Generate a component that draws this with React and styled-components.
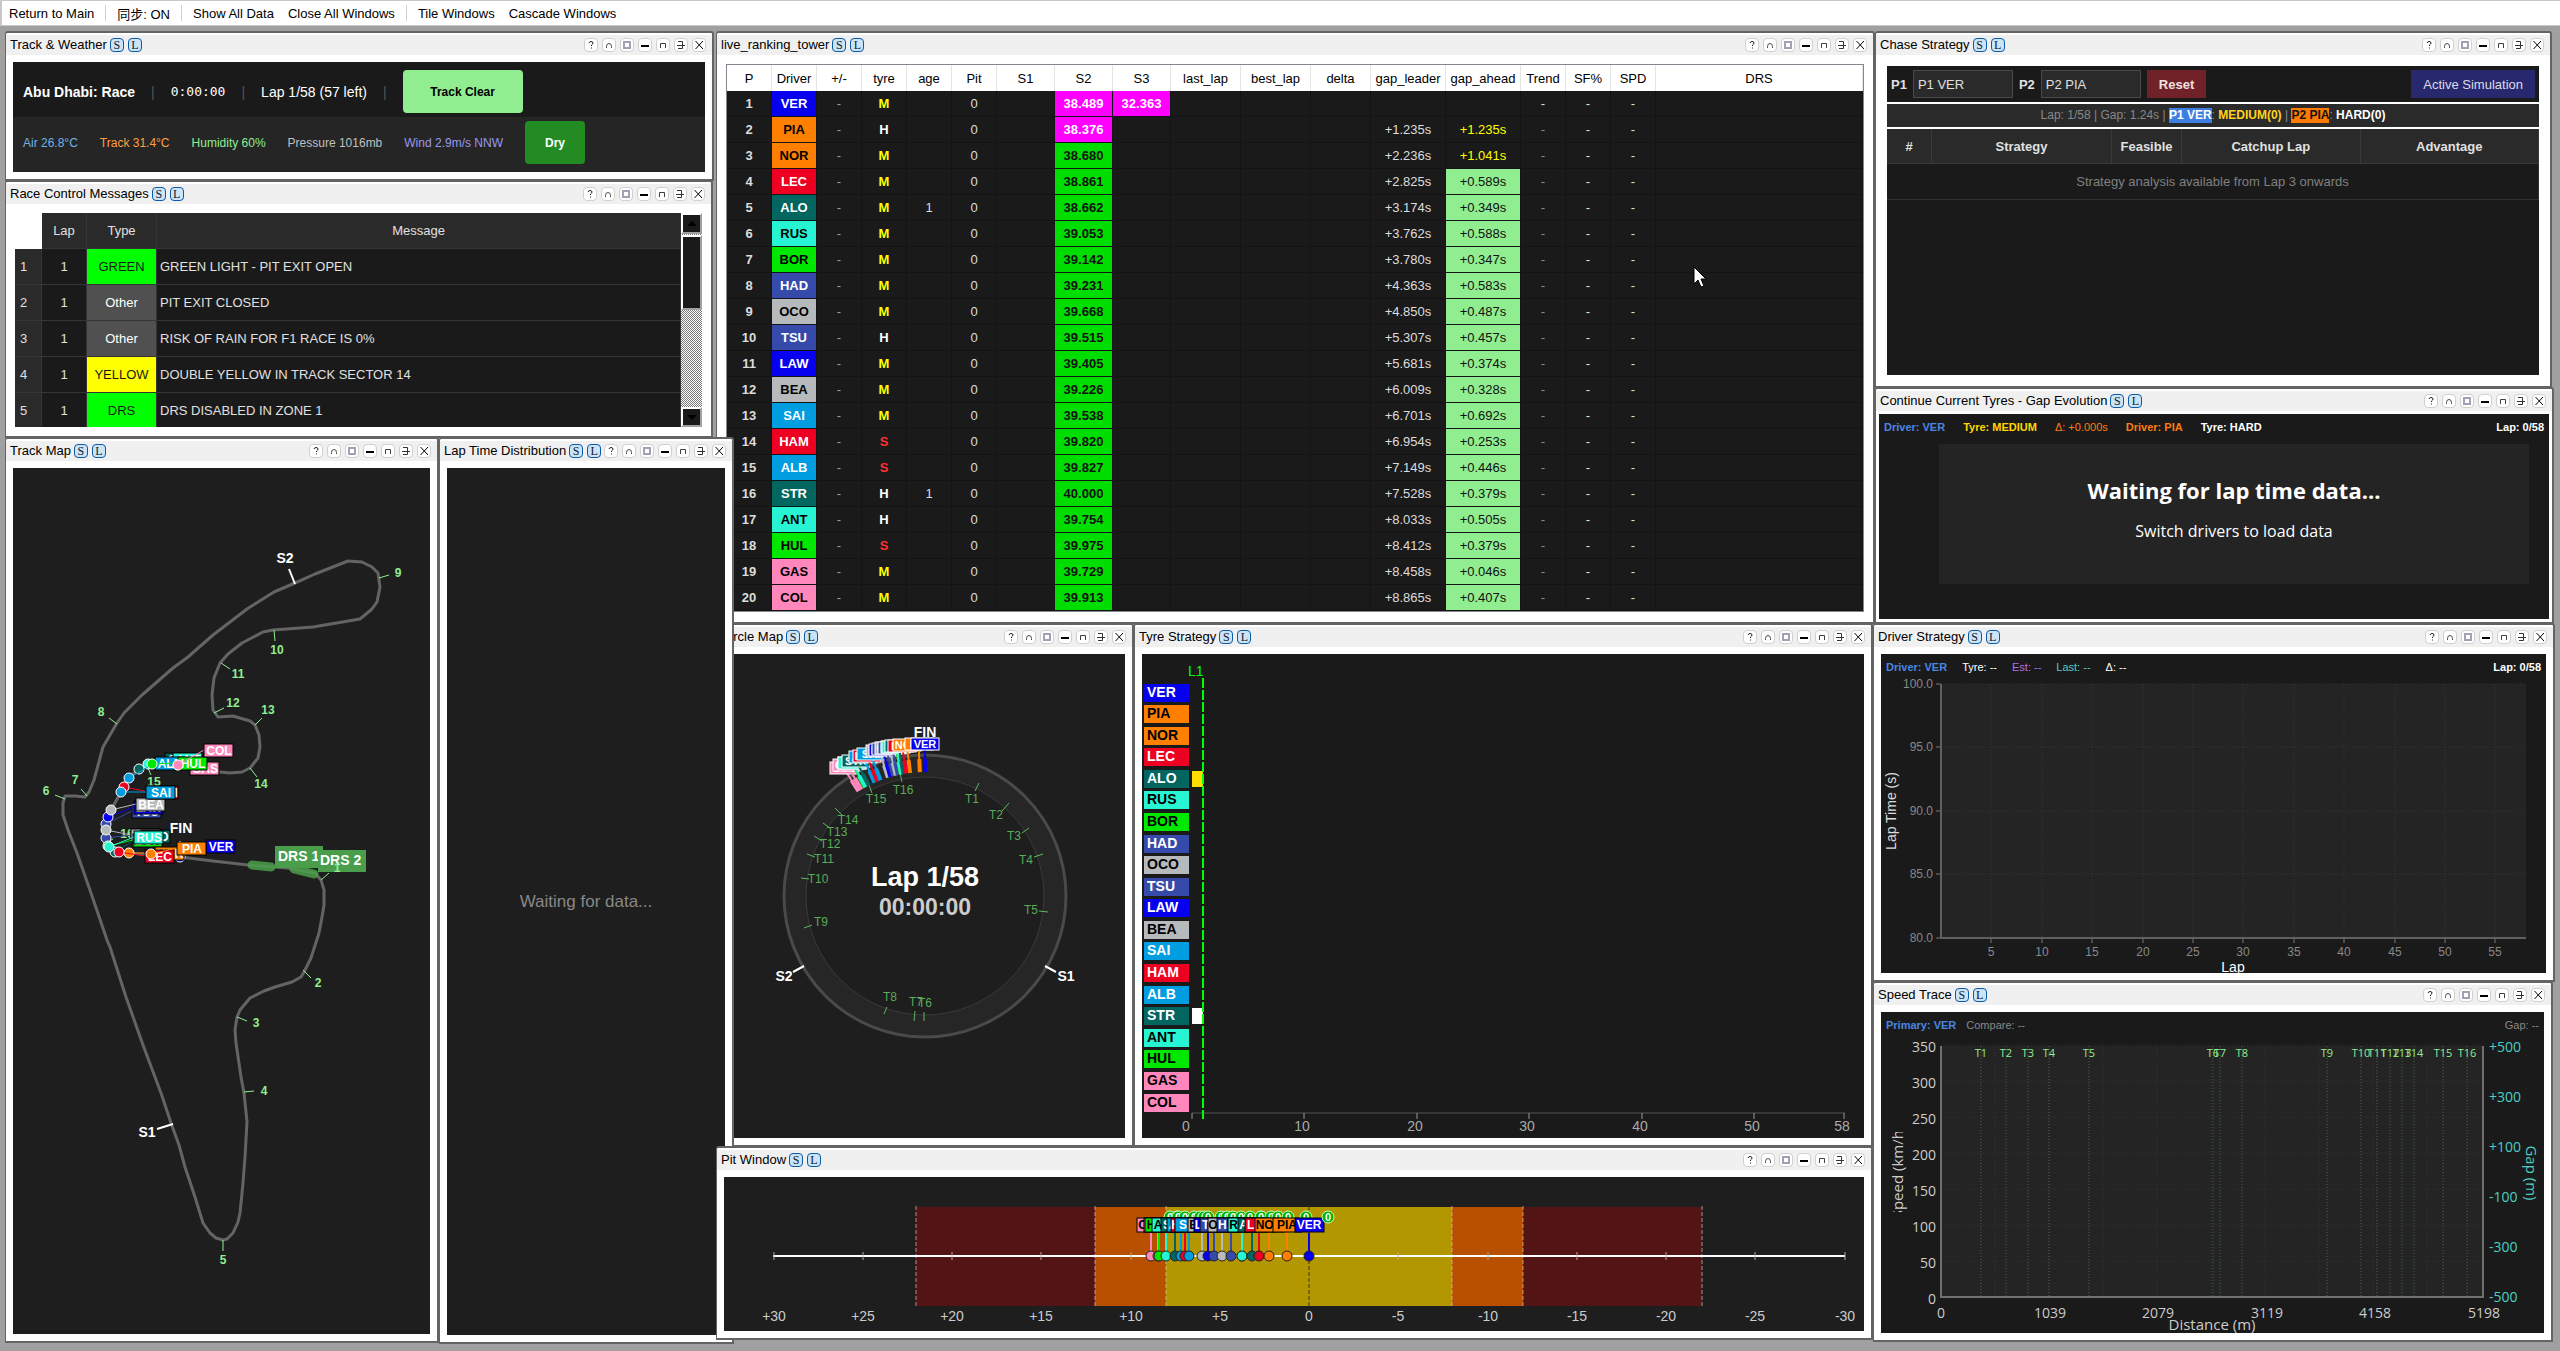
import React from 'react'
import styled, { createGlobalStyle } from 'styled-components'

const GlobalStyle = createGlobalStyle`
    * {
        box-sizing: border-box;
    }
    html, body {
        margin: 0;
        background: #a0a0a0;
    }
    body, button, select, table {
        font-family: "Liberation Sans", "Noto Sans CJK TC", sans-serif;
        font-size: 13px;
    }
    svg {
        display: block;
    }
`

const BLUE = { bg: '#0600ef', fg: '#fff' }
const ORANGE = { bg: '#ff8000', fg: '#000' }
const RED = { bg: '#ed0022', fg: '#fff' }
const TEAL = { bg: '#00665f', fg: '#fff' }
const CYAN = { bg: '#27f4d2', fg: '#000' }
const GREEN = { bg: '#00e700', fg: '#000' }
const INDIGO = { bg: '#364aab', fg: '#fff' }
const SILVER = { bg: '#b6babd', fg: '#000' }
const SKY = { bg: '#009de0', fg: '#fff' }
const PINK = { bg: '#ff87bc', fg: '#000' }

// code, team, tyre, age, sector 2, gap to leader, gap ahead, angle on the circle map
const drivers = [
    ['VER', BLUE, 'M', '', '38.489', 0, '', 0],
    ['PIA', ORANGE, 'H', '', '38.376', 1.235, '+1.235s', 2.4],
    ['NOR', ORANGE, 'M', '', '38.680', 2.236, '+1.041s', 6.9],
    ['LEC', RED, 'M', '', '38.861', 2.825, '+0.589s', 8.7],
    ['ALO', TEAL, 'M', '1', '38.662', 3.174, '+0.349s', 10],
    ['RUS', CYAN, 'M', '', '39.053', 3.762, '+0.588s', 11],
    ['BOR', GREEN, 'M', '', '39.142', 3.780, '+0.347s', 11.2],
    ['HAD', INDIGO, 'M', '', '39.231', 4.363, '+0.583s', 12.6],
    ['OCO', SILVER, 'M', '', '39.668', 4.850, '+0.487s', 13.6],
    ['TSU', INDIGO, 'H', '', '39.515', 5.307, '+0.457s', 14.8],
    ['LAW', BLUE, 'M', '', '39.405', 5.681, '+0.374s', 16.2],
    ['BEA', SILVER, 'M', '', '39.226', 6.009, '+0.328s', 17.4],
    ['SAI', SKY, 'M', '', '39.538', 6.701, '+0.692s', 21],
    ['HAM', RED, 'S', '', '39.820', 6.954, '+0.253s', 22.6],
    ['ALB', SKY, 'S', '', '39.827', 7.149, '+0.446s', 24],
    ['STR', TEAL, 'H', '1', '40.000', 7.528, '+0.379s', 27],
    ['ANT', CYAN, 'H', '', '39.754', 8.033, '+0.505s', 28.6],
    ['HUL', GREEN, 'S', '', '39.975', 8.412, '+0.379s', 28.9],
    ['GAS', PINK, 'M', '', '39.729', 8.458, '+0.046s', 30.8],
    ['COL', PINK, 'M', '', '39.913', 8.865, '+0.407s', 32.4],
].map(([code, team, tyre, age, s2, gap, ahead, angle]) => ({ code, team, tyre, age, s2, gap, ahead, angle }))

const teamOf = code => drivers.find(d => d.code === code).team
const tyreColors = { M: '#ffff00', H: '#ffffff', S: '#ff3030' }

/* ---------- window chrome ---------- */

const DESK_WIDTH = 2560

const Frame = styled.section`
    position: absolute;
    left: ${props => props.$x / DESK_WIDTH * 100}%;
    top: ${props => props.$y}px;
    width: ${props => props.$w / DESK_WIDTH * 100}%;
    height: ${props => props.$h}px;
    display: flex;
    flex-direction: column;
    overflow: hidden;
    padding-top: 2px;
    background: #fff;
    border: 2px solid #646464;
    border-left-width: 1px;
    border-radius: 3px 3px 0 0;
`
const TitleBar = styled.header`
    flex: none;
    display: flex;
    align-items: center;
    height: 20px;
    padding: 0 6px 0 4px;
    background: #f0f0f0;
`
const Title = styled.h2`
    margin: 0 3px 0 0;
    font-size: 13px;
    font-weight: 400;
    line-height: 16px;
    white-space: nowrap;
    color: #000;
`
const ButtonGroup = styled.div`
    flex: none;
    display: flex;
    gap: 4px;
`
const Badge = styled.button`
    width: 14px;
    height: 14px;
    padding: 0;
    overflow: hidden;
    border: 1px solid #0b5aa5;
    border-radius: 4px;
    background: #cce4f7;
    color: #10202c;
    font-family: "Liberation Serif", serif;
    font-size: 12px;
    line-height: 12px;
`
const Spacer = styled.div`
    flex: 1;
`
const ChromeButton = styled.button`
    width: 14px;
    height: 14px;
    padding: 0;
    border: 1px solid #d0d0d0;
    border-radius: 4px;
    background: #fff;
`
const Body = styled.div`
    flex: 1;
    min-height: 0;
    display: flex;
    flex-direction: column;
    padding: ${props => props.$pad}px;
`

const chromeIcons = [
    ['Help', <path key="i" d="M4 4 Q4.500 2.500 6 2.500 Q8 2.500 8 4 Q8 5 6.500 6 V7 M6.500 8.500 V9.500" fill="none" stroke="#222" />],
    ['Refresh', <path key="i" d="M3.500 9 V7.500 Q3.500 4.500 6 4.500 Q8.500 4.500 8.500 7.500 V9" fill="none" stroke="#554a44" />],
    ['Settings', <rect key="i" x="3" y="3" width="6" height="6" fill="#fff" stroke="#a49fb4" strokeWidth="2" />],
    ['Minimize', <rect key="i" x="2" y="6" width="8" height="2" fill="#000" />],
    ['Maximize', <path key="i" d="M3.500 9 V4.500 H8.500 V9" fill="none" stroke="#443c44" />],
    ['Pop out', <path key="i" d="M3 2.500 H7.500 V9.500 H3 M2 6.500 H10" fill="none" stroke="#333" />],
    ['Close', <path key="i" d="M2.500 2 L10 10 M10 2 L2.500 10" fill="none" stroke="#000" />],
]

const DeskWindow = ({ title, x, y, w, h, pad = 7, children }) => (
    <Frame $x={x} $y={y} $w={w} $h={h}>
        <TitleBar>
            <Title>{title}</Title>
            <ButtonGroup>
                <Badge aria-label="Sync">S</Badge>
                <Badge aria-label="Lock">L</Badge>
            </ButtonGroup>
            <Spacer />
            <ButtonGroup>
                {chromeIcons.map(([label, icon]) => (
                    <ChromeButton key={label} aria-label={label}>
                        <svg width="12" height="12" viewBox="0 0 12 12">{icon}</svg>
                    </ChromeButton>
                ))}
            </ButtonGroup>
        </TitleBar>
        <Body $pad={pad}>{children}</Body>
    </Frame>
)

/* ---------- menu bar ---------- */

const MenuBar = styled.nav`
    display: flex;
    align-items: center;
    height: 26px;
    background: #fff;
    border: solid #c8c8c8;
    border-width: 1px 0 1px 2px;
`
const MenuItem = styled.button`
    height: 20px;
    padding: 0 7px;
    border: 0;
    background: none;
    color: #000;
    white-space: nowrap;
`
const MenuSep = styled.span`
    width: 1px;
    height: 16px;
    margin: 0 4px;
    background: #d0d0d0;
`

/* ---------- track & weather ---------- */

const StatusRow = styled.div`
    flex: 1;
    display: flex;
    align-items: center;
    gap: ${props => props.$gap}px;
    padding: ${props => props.$pad};
    background: ${props => props.$bg};
    font-size: ${props => props.$size}px;
    color: #fff;
    white-space: nowrap;
`
const Pipe = styled.span`
    color: #555;
`
const Clock = styled.span`
    font-family: "DejaVu Sans Mono", monospace;
    font-size: 13px;
`
const Reading = styled.span`
    color: ${props => props.$color};
`
const Flag = styled.span`
    display: flex;
    align-items: center;
    justify-content: center;
    width: ${props => props.$w}px;
    height: 43px;
    border-radius: 4px;
    background: ${props => props.$bg};
    color: ${props => props.$color};
    font-size: 12px;
    font-weight: 700;
`

const TrackWeather = () => (
    <>
        <StatusRow $bg="#1a1a1a" $gap={16} $size={14} $pad="4px 10px 0">
            <strong>Abu Dhabi: Race</strong>
            <Pipe>|</Pipe>
            <Clock>0:00:00</Clock>
            <Pipe>|</Pipe>
            <span>Lap 1/58 (57 left)</span>
            <Pipe>|</Pipe>
            <Flag $w={120} $bg="#90ee90" $color="#000">Track Clear</Flag>
        </StatusRow>
        <StatusRow $bg="#252525" $gap={22} $size={12} $pad="0 10px 4px">
            <Reading $color="#6fb4e8">Air 26.8°C</Reading>
            <Reading $color="#ff9f40">Track 31.4°C</Reading>
            <Reading $color="#90ee90">Humidity 60%</Reading>
            <Reading $color="#c0c0c0">Pressure 1016mb</Reading>
            <Reading $color="#9999ee">Wind 2.9m/s NNW</Reading>
            <Flag $w={60} $bg="#228b22" $color="#fff">Dry</Flag>
        </StatusRow>
    </>
)

/* ---------- race control ---------- */

const ScrollPane = styled.div`
    flex: 1;
    min-height: 0;
    display: flex;
    overflow: hidden;
`
const MessageTable = styled.table`
    flex: 1;
    align-self: flex-start;
    table-layout: fixed;
    border-collapse: separate;
    border-spacing: 0;
    background: #1a1a1a;
    color: #e0e0e0;
    th, td {
        padding: 0;
        height: 36px;
        font-weight: 400;
        text-align: center;
        border: solid #353535;
        border-width: 0 1px 1px 0;
    }
    thead th {
        background: #2a2a2a;
    }
    thead td {
        background: #fff;
        border-color: #fff;
    }
    tbody th {
        padding-left: 5px;
        text-align: left;
        background: #2a2a2a;
    }
    td:last-child {
        padding-left: 3px;
        text-align: left;
    }
`
const TypeCell = styled.td`
    background: ${props => props.$bg};
    color: ${props => props.$fg};
`
const ScrollBar = styled.div`
    display: flex;
    flex-direction: column;
    gap: 1px;
    width: 21px;
    background: repeating-conic-gradient(#fff 0 25%, #777 0 50%) 0 0 / 2px 2px;
`
const ScrollPart = styled.div`
    flex: none;
    display: flex;
    align-items: center;
    justify-content: center;
    height: ${props => props.$h}px;
    background: #1a1a1a;
    border: 2px solid #a0a0a0;
    border-top-color: #fff;
    border-left-color: #fff;
`

const messages = [
    ['GREEN', '#00ff00', '#1a1a1a', 'GREEN LIGHT - PIT EXIT OPEN'],
    ['Other', '#505050', '#fff', 'PIT EXIT CLOSED'],
    ['Other', '#505050', '#fff', 'RISK OF RAIN FOR F1 RACE IS 0%'],
    ['YELLOW', '#ffff00', '#1a1a1a', 'DOUBLE YELLOW IN TRACK SECTOR 14'],
    ['DRS', '#00ff00', '#1a1a1a', 'DRS DISABLED IN ZONE 1'],
]

const RaceControl = () => (
    <ScrollPane>
        <MessageTable>
            <colgroup>
                <col width="27" /><col width="45" /><col width="70" /><col />
            </colgroup>
            <thead>
                <tr><td /><th>Lap</th><th>Type</th><th>Message</th></tr>
            </thead>
            <tbody>
                {messages.map(([type, bg, fg, text], i) => (
                    <tr key={i}>
                        <th>{i + 1}</th>
                        <td>1</td>
                        <TypeCell $bg={bg} $fg={fg}>{type}</TypeCell>
                        <td>{text}</td>
                    </tr>
                ))}
            </tbody>
        </MessageTable>
        <ScrollBar>
            <ScrollPart $h={21}>
                <svg width="10" height="5" viewBox="0 0 10 5"><path d="M0 5 L5 0 L10 5 Z" /></svg>
            </ScrollPart>
            <ScrollPart $h={75} />
            <Spacer />
            <ScrollPart $h={20}>
                <svg width="10" height="5" viewBox="0 0 10 5"><path d="M0 0 L5 5 L10 0 Z" /></svg>
            </ScrollPart>
        </ScrollBar>
    </ScrollPane>
)

/* ---------- ranking tower ---------- */

const TowerTable = styled.table`
    width: 100%;
    table-layout: fixed;
    border-collapse: separate;
    border-spacing: 0;
    border: 1px solid #828790;
    background: #1a1a1a;
    color: #ddd;
    text-align: center;
    th {
        height: 26px;
        padding: 0;
        background: #fff;
        color: #000;
        font-weight: 400;
        border-right: 1px solid #e5e5e5;
    }
`
const Cell = styled.td`
    height: 26px;
    padding: 0;
    background: ${props => props.$bg || '#1a1a1a'};
    color: ${props => props.$fg || '#ddd'};
    font-weight: ${props => props.$bold ? 700 : 400};
    border: solid #141414;
    border-width: 0 1px 1px 0;
`

const towerCols = [
    ['P', 45], ['Driver', 45], ['+/-', 45], ['tyre', 45], ['age', 45], ['Pit', 45],
    ['S1', 58], ['S2', 58], ['S3', 58], ['last_lap', 70], ['best_lap', 70], ['delta', 60],
    ['gap_leader', 75], ['gap_ahead', 75], ['Trend', 45], ['SF%', 45], ['SPD', 45], ['DRS', null],
]

const aheadColors = (i, value) => {
    if (!value) return {}
    return i < 3 ? { $fg: '#ffff00' } : { $bg: '#90ee90', $fg: '#111' }
}

const RankingTower = () => (
    <TowerTable>
        <colgroup>
            {towerCols.map(([name, width]) => <col key={name} width={width || undefined} />)}
        </colgroup>
        <thead>
            <tr>{towerCols.map(([name]) => <th key={name}>{name}</th>)}</tr>
        </thead>
        <tbody>
            {drivers.map((d, i) => (
                <tr key={d.code}>
                    <Cell $bold>{i + 1}</Cell>
                    <Cell $bold $bg={d.team.bg} $fg={d.team.fg}>{d.code}</Cell>
                    <Cell $fg="#999">-</Cell>
                    <Cell $bold $fg={tyreColors[d.tyre]}>{d.tyre}</Cell>
                    <Cell>{d.age}</Cell>
                    <Cell>0</Cell>
                    <Cell />
                    <Cell $bold $bg={i < 2 ? '#ff00ff' : '#00dd00'} $fg={i < 2 ? '#fff' : '#111'}>{d.s2}</Cell>
                    {i === 0 ? <Cell $bold $bg="#ff00ff" $fg="#fff">32.363</Cell> : <Cell />}
                    <Cell />
                    <Cell />
                    <Cell />
                    <Cell>{i > 0 && `+${d.gap.toFixed(3)}s`}</Cell>
                    <Cell {...aheadColors(i, d.ahead)}>{d.ahead}</Cell>
                    <Cell $fg={i ? '#888' : '#ddd'}>-</Cell>
                    <Cell>-</Cell>
                    <Cell>-</Cell>
                    <Cell />
                </tr>
            ))}
        </tbody>
    </TowerTable>
)

/* ---------- chase strategy ---------- */

const ChaseBar = styled.div`
    flex: none;
    display: flex;
    align-items: center;
    gap: 6px;
    height: 36px;
    padding: 0 4px;
    background: #1a1a1a;
    color: #e0e0e0;
    font-weight: 700;
`
const DriverSelect = styled.select`
    appearance: none;
    width: 100px;
    height: 28px;
    padding: 0 4px;
    border: 1px solid #4a4a4a;
    border-radius: 0;
    background: #2a2a2a;
    color: #e0e0e0;
`
const ChaseButton = styled.button`
    height: 28px;
    padding: 0 12px;
    border: 0;
    background: ${props => props.$bg};
    color: ${props => props.$fg};
    font-weight: ${props => props.$bold ? 700 : 400};
`
const ChaseStatus = styled.div`
    flex: none;
    margin: 2px 0;
    height: 23px;
    background: #2a2a2a;
    color: #888;
    font-size: 12px;
    line-height: 23px;
    text-align: center;
`
const Mark = styled.strong`
    display: inline-block;
    line-height: 15px;
    background: ${props => props.$bg || 'none'};
    color: ${props => props.$fg};
`
const ChaseArea = styled.div`
    flex: 1;
    background: #1a1a1a;
`
const ChaseTable = styled.table`
    width: 100%;
    table-layout: fixed;
    border-collapse: separate;
    border-spacing: 0;
    text-align: center;
    th {
        height: 35px;
        padding: 0;
        background: #2a2a2a;
        color: #e0e0e0;
        border: solid #3a3a3a;
        border-width: 0 1px 1px 0;
    }
    td {
        height: 36px;
        color: #808080;
        border: solid #333;
        border-width: 0 1px 1px 0;
    }
`

const ChaseStrategy = () => (
    <>
        <ChaseBar>
            <label htmlFor="p1">P1</label>
            <DriverSelect id="p1"><option>P1 VER</option></DriverSelect>
            <label htmlFor="p2">P2</label>
            <DriverSelect id="p2"><option>P2 PIA</option></DriverSelect>
            <ChaseButton $bg="#702228" $fg="#f0e0e0" $bold>Reset</ChaseButton>
            <Spacer />
            <ChaseButton $bg="#28286e" $fg="#dcdce8">Active Simulation</ChaseButton>
        </ChaseBar>
        <ChaseStatus>
            Lap: 1/58 | Gap: 1.24s | <Mark $bg="#3d7fe0" $fg="#fff">P1 VER</Mark>: <Mark $fg="#ffd21a">MEDIUM(0)</Mark> | <Mark $bg="#ff7a00" $fg="#111">P2 PIA</Mark>: <Mark $fg="#fff">HARD(0)</Mark>
        </ChaseStatus>
        <ChaseArea>
            <ChaseTable>
                <colgroup>
                    <col width="45" /><col width="180" /><col width="70" /><col /><col />
                </colgroup>
                <thead>
                    <tr><th>#</th><th>Strategy</th><th>Feasible</th><th>Catchup Lap</th><th>Advantage</th></tr>
                </thead>
                <tbody>
                    <tr><td colSpan="5">Strategy analysis available from Lap 3 onwards</td></tr>
                </tbody>
            </ChaseTable>
        </ChaseArea>
    </>
)

/* ---------- info rows and waiting panels ---------- */

const Panel = styled.div`
    flex: 1;
    min-height: 0;
    display: flex;
    flex-direction: column;
    overflow: hidden;
    background: ${props => props.$bg || '#1a1a1a'};
`
const InfoRow = styled.div`
    flex: none;
    display: flex;
    align-items: center;
    gap: ${props => props.$gap || 15}px;
    height: 26px;
    padding: 0 5px;
    font-size: 11px;
    color: #fff;
    white-space: nowrap;
`
const Info = styled.span`
    color: ${props => props.$color || '#fff'};
    font-weight: ${props => props.$bold ? 700 : 400};
`
const GapPlot = styled.div`
    flex: 1;
    display: flex;
    flex-direction: column;
    align-items: center;
    justify-content: center;
    gap: 14px;
    margin: 4px 20px 35px 60px;
    padding-bottom: 10px;
    background: #242424;
    color: #fff;
    font-family: "Open Sans", sans-serif;
    font-size: 16px;
    line-height: 24px;
`
const GapTitle = styled.strong`
    font-size: 22px;
    line-height: 30px;
`
const Waiting = styled.div`
    flex: 1;
    display: flex;
    align-items: center;
    justify-content: center;
    background: #1e1e1e;
    color: #888;
    font-size: 17px;
`
const Chart = styled.svg`
    width: 100%;
    flex: 1;
    min-height: 0;
    overflow: visible;
    font-family: ${props => props.$font || '"Liberation Sans", sans-serif'};
`

const GapEvolution = () => (
    <Panel>
        <InfoRow $gap={18}>
            <Info $bold $color="#4a86e0">Driver: VER</Info>
            <Info $bold $color="#ffd700">Tyre: MEDIUM</Info>
            <Info $color="#ff7a10">Δ: +0.000s</Info>
            <Info $bold $color="#ff7a10">Driver: PIA</Info>
            <Info $bold>Tyre: HARD</Info>
            <Spacer />
            <Info $bold>Lap: 0/58</Info>
        </InfoRow>
        <GapPlot>
            <GapTitle>Waiting for lap time data...</GapTitle>
            <span>Switch drivers to load data</span>
        </GapPlot>
    </Panel>
)

/* ---------- driver strategy chart ---------- */

const DriverStrategy = () => (
    <Panel>
        <InfoRow>
            <Info $bold $color="#4a86e0">Driver: VER</Info>
            <Info>Tyre: --</Info>
            <Info $color="#b070f0">Est: --</Info>
            <Info $color="#4ecdc4">Last: --</Info>
            <Info>Δ: --</Info>
            <Spacer />
            <Info $bold>Lap: 0/58</Info>
        </InfoRow>
        <Chart viewBox="1881 680 665 293">
            <rect x="1941" y="684" width="585" height="253" fill="#242424" />
            {[0, 1, 2, 3, 4].map(i => {
                const y = Math.round(684 + i * 63.4)
                return (
                    <g key={i}>
                        <path d={`M1941 ${y} H2526`} stroke="#363636" strokeDasharray="1 2" />
                        <path d={`M1936 ${y} H1941`} stroke="#777" />
                        <text x="1933" y={y + 4} textAnchor="end" fontSize="12" fill="#888">{(100 - i * 5).toFixed(1)}</text>
                    </g>
                )
            })}
            {[5, 10, 15, 20, 25, 30, 35, 40, 45, 50, 55].map(lap => {
                const x = Math.round(1941 + lap * 10.08)
                return (
                    <g key={lap}>
                        <path d={`M${x} 684 V937`} stroke="#363636" strokeDasharray="1 2" />
                        <path d={`M${x} 938 V943`} stroke="#777" />
                        <text x={x} y="956" textAnchor="middle" fontSize="12" fill="#888">{lap}</text>
                    </g>
                )
            })}
            <path d="M1941 684 V938 H2526" fill="none" stroke="#606060" strokeWidth="2" />
            <text x="2233" y="972" textAnchor="middle" fontSize="14" fill="#fff">Lap</text>
            <text transform="translate(1896 811) rotate(-90)" textAnchor="middle" fontSize="14" fill="#ddd">Lap Time (s)</text>
        </Chart>
    </Panel>
)

/* ---------- speed trace chart ---------- */

const turnsByDistance = [1981, 2006, 2028, 2049, 2089, 2213, 2220, 2242, 2327, 2361, 2377, 2390, 2402, 2414, 2443, 2467]

const SpeedTrace = () => (
    <Panel>
        <InfoRow $gap={10}>
            <Info $bold $color="#4a86e0">Primary: VER</Info>
            <Info $color="#888">Compare: --</Info>
            <Spacer />
            <Info $color="#888">Gap: --</Info>
        </InfoRow>
        <Chart viewBox="1881 1038 663 295" $font='"Open Sans", sans-serif'>
            <clipPath id="speedTitle"><rect x="1885" y="1132" width="24" height="80" /></clipPath>
            <rect x="1941" y="1046" width="542" height="251" fill="#242424" />
            {[350, 300, 250, 200, 150, 100, 50, 0].map((speed, i) => (
                <g key={speed}>
                    <path d={`M1941 ${1045 + i * 36} H2483`} stroke="#333" strokeDasharray="1 2" />
                    <text x="1936" y={1052 + i * 36} textAnchor="end" fontSize="14" fill="#ccc">{speed}</text>
                </g>
            ))}
            {[1, 2, 3, 4, 5, 6, 7, 8, 9].map(i => (
                <path key={i} d={`M${1941 + i * 54} 1046 V1297`} stroke="#333" strokeDasharray="1 2" />
            ))}
            {turnsByDistance.map((x, i) => (
                <g key={x}>
                    <path d={`M${x} 1046 V1297`} stroke="#3f6a3f" strokeWidth="1" strokeDasharray="1 2" />
                    <text x={x} y="1057" textAnchor="middle" fontSize="11" fill="#90ee90">{`T${i + 1}`}</text>
                </g>
            ))}
            <path d="M1941 1046 V1297 H2483 V1046" fill="none" stroke="#707070" strokeWidth="2" />
            {['+500', '+300', '+100', '-100', '-300', '-500'].map((label, i) => (
                <text key={label} x="2489" y={1052 + i * 50} fontSize="14" fill="#4ecdc4">{label}</text>
            ))}
            {[0, 1039, 2079, 3119, 4158, 5198].map((m, i) => (
                <text key={m} x={Math.round(1941 + i * 108.5)} y="1318" textAnchor="middle" fontSize="14" fill="#ccc">{m}</text>
            ))}
            <text x="2212" y="1330" textAnchor="middle" fontSize="15" fill="#ccc">Distance (m)</text>
            <g clipPath="url(#speedTitle)">
                <text transform="translate(1903 1172) rotate(-90)" textAnchor="middle" fontSize="15" fill="#ccc">Speed (km/h)</text>
            </g>
            <text transform="translate(2526 1173) rotate(90)" textAnchor="middle" fontSize="15" fill="#4ecdc4">Gap (m)</text>
        </Chart>
    </Panel>
)

/* ---------- track map ---------- */

const trackPoints = `180,857 213,861 248,865 287,868 315,873 321,880 324,890 324,905 322,917 319,933 311,958 304,972 301,977
292,982 275,987 264,991 250,998 240,1010 237,1017 235,1030 236,1043 241,1077 244,1093 247,1122 245,1157 243,1183 240,1213
238,1222 233,1233 227,1239 223,1240 216,1238 210,1233 203,1223 195,1197 185,1167 179,1145 171,1123 161,1093 143,1045
126,997 110,947 107,940 91,893 77,853 68,830 63,815 63,803 65,796 75,796 85,797 89,792 94,780 103,747 117,723 124,713
142,695 173,668 188,657 213,635 247,609 274,592 295,583 315,574 348,561 362,562 372,567 378,573 380,587 377,602 372,609
360,619 313,627 273,630 263,632 242,643 228,654 220,663 214,678 212,695 213,710 218,717 233,716 250,721 255,725 259,735
260,747 258,758 250,768 242,772 230,773 200,770 178,767 152,763 138,770 128,778 121,792 111,810 106,830 107,845 113,852
130,853 152,855`

// tick from, tick to, label anchor
const turns = [
    [321, 880, 329, 873, 337, 872], [303, 970, 311, 978, 318, 987], [237, 1017, 247, 1021, 256, 1027],
    [244, 1092, 254, 1091, 264, 1095], [223, 1240, 223, 1251, 223, 1264], [65, 799, 55, 795, 46, 795],
    [87, 796, 81, 789, 75, 784], [117, 724, 109, 718, 101, 716], [379, 578, 389, 575, 398, 577],
    [274, 630, 275, 641, 277, 654], [221, 663, 230, 669, 238, 678], [214, 713, 224, 708, 233, 707],
    [255, 725, 262, 718, 268, 714], [250, 768, 257, 777, 261, 788], [148, 768, 151, 775, 154, 786],
    [106, 843, 113, 839, 127, 838],
]

// code, dot position, label corner; later ones lie on top
const cars = [
    ['VER', 180, 857, 206, 840], ['TSU', 106, 824, 132, 805], ['LAW', 108, 817, 134, 801], ['BEA', 111, 810, 136, 798],
    ['HAM', 124, 787, 149, 786], ['SAI', 121, 792, 146, 786], ['HAD', 106, 838, 131, 829], ['OCO', 106, 830, 131, 829],
    ['ALO', 115, 852, 141, 830], ['BOR', 108, 846, 133, 834], ['RUS', 109, 847, 134, 831], ['NOR', 129, 853, 155, 847],
    ['LEC', 119, 852, 145, 850], ['PIA', 151, 854, 177, 842], ['STR', 139, 769, 165, 753], ['ANT', 148, 764, 173, 753],
    ['ALB', 129, 778, 155, 757], ['GAS', 178, 765, 190, 762], ['HUL', 152, 764, 178, 757], ['COL', 178, 765, 204, 744],
]

const TrackMap = () => (
    <Panel $bg="#1e1e1e">
        <Chart viewBox="13 468 417 866">
            <polygon points={trackPoints} fill="none" stroke="#646464" strokeWidth="3" strokeLinejoin="round" />
            <path d="M252 865 L271 867 M294 869 L314 874" stroke="#4a9d4a" strokeOpacity="0.85" strokeWidth="9" strokeLinecap="round" />
            <path d="M289 569 L295 584 M157 1129 L173 1124 M180 841 V857" stroke="#fff" strokeWidth="2" />
            <g fontSize="14" fontWeight="700" fill="#fff" textAnchor="middle">
                <text x="285" y="563">S2</text>
                <text x="147" y="1137">S1</text>
                <text x="181" y="833">FIN</text>
            </g>
            <rect x="275" y="846" width="48" height="22" fill="#4a9d4a" />
            <text x="278" y="861" fontSize="14" fontWeight="700" fill="#fff">DRS 1</text>
            <rect x="318" y="850" width="48" height="22" fill="#4a9d4a" />
            <text x="320" y="865" fontSize="14" fontWeight="700" fill="#fff">DRS 2</text>
            {turns.map(([x1, y1, x2, y2, tx, ty], i) => (
                <g key={i}>
                    <path d={`M${x1} ${y1} L${x2} ${y2}`} stroke="#90ee90" />
                    <text x={tx} y={ty} textAnchor="middle" fontSize="12" fontWeight="700" fill="#90ee90">{i + 1}</text>
                </g>
            ))}
            {cars.map(([code, x, y, lx, ly]) => {
                const { bg } = teamOf(code)
                return (
                    <g key={code}>
                        <path d={`M${x} ${y} L${lx} ${ly + 6}`} stroke={bg} />
                        <rect x={lx} y={ly} width="29" height="13" fill={bg} stroke="#000" />
                        <text x={lx + 15} y={ly + 11} textAnchor="middle" fontSize="12" fontWeight="700" fill="#fff">{code}</text>
                        <circle cx={x} cy={y} r="5" fill={bg} stroke="#fff" />
                    </g>
                )
            })}
        </Chart>
    </Panel>
)

/* ---------- circle map ---------- */

const CX = 925
const CY = 896

const circleTurns = [
    [975, 791, 979, 783, 972, 803], [1002, 811, 1009, 803, 996, 819], [1022, 833, 1029, 828, 1014, 840],
    [1034, 857, 1043, 854, 1026, 864], [1039, 911, 1048, 912, 1031, 914], [924, 1012, 924, 1021, 925, 1007],
    [915, 1011, 914, 1021, 916, 1006], [887, 1007, 884, 1014, 890, 1001], [804, 928, 812, 925, 821, 926],
    [801, 878, 809, 879, 818, 883], [807, 854, 815, 857, 824, 863], [814, 836, 822, 841, 830, 848],
    [823, 823, 830, 828, 837, 836], [835, 808, 842, 815, 848, 824], [869, 785, 872, 793, 876, 803],
    [900, 773, 902, 782, 903, 794],
]

const CircleMap = () => (
    <Panel $bg="#1e1e1e">
        <Chart viewBox="724 654 401 484">
            <circle cx={CX} cy={CY} r="141" fill="#262626" stroke="#4a4a4a" strokeWidth="3" />
            <circle cx={CX} cy={CY} r="119" fill="#1e1e1e" stroke="#3a3a3a" />
            {circleTurns.map(([x1, y1, x2, y2, tx, ty], i) => (
                <g key={i}>
                    <path d={`M${x1} ${y1} L${x2} ${y2}`} stroke="#5fb85f" />
                    <text x={tx} y={ty} textAnchor="middle" fontSize="12" fill="#5aab5a">{`T${i + 1}`}</text>
                </g>
            ))}
            <path d="M1045 966 L1056 972 M804 966 L793 972" stroke="#fff" strokeWidth="2" />
            <g fontWeight="700" fill="#fff" textAnchor="middle">
                <text x="1066" y="981" fontSize="14">S1</text>
                <text x="784" y="981" fontSize="14">S2</text>
                <text x="925" y="737" fontSize="14">FIN</text>
                <text x="925" y="886" fontSize="27">Lap 1/58</text>
                <text x="925" y="915" fontSize="23" fill="#ccc">00:00:00</text>
            </g>
            {[...drivers].reverse().map(d => {
                const rad = d.angle * Math.PI / 180
                const lx = Math.round(CX - Math.sin(rad) * 152)
                const ly = Math.round(CY - Math.cos(rad) * 152)
                return (
                    <g key={d.code}>
                        <g transform={`translate(${CX} ${CY}) rotate(${-d.angle})`}>
                            <rect x="-1" y="-146" width="2" height="10" fill={d.team.bg} />
                            <rect x="-2" y="-137" width="4" height="13" fill={d.team.bg} />
                        </g>
                        <rect x={lx - 14} y={ly - 6} width="28" height="12" fill={d.team.bg} stroke="#fff" />
                        <text x={lx} y={ly + 4} textAnchor="middle" fontSize="11" fontWeight="700" fill="#fff">{d.code}</text>
                    </g>
                )
            })}
        </Chart>
    </Panel>
)

/* ---------- tyre strategy ---------- */

const stints = { ALO: '#ffdd00', STR: '#ffffff' }

const TyreStrategy = () => (
    <Panel>
        <Chart viewBox="1142 654 722 484">
            {drivers.map((d, i) => {
                const y = Math.floor(684 + i * 21.58)
                return (
                    <g key={d.code}>
                        <rect x="1144" y={y} width="45" height="18" fill={d.team.bg} />
                        <text x="1147" y={y + 13} fontSize="14" fontWeight="700" fill={d.team.fg}>{d.code}</text>
                        {stints[d.code] && <rect x="1192" y={y + 1} width="11" height="16" fill={stints[d.code]} />}
                    </g>
                )
            })}
            <path d="M1192 1113 H1845" stroke="#555" />
            {[0, 10, 20, 30, 40, 50, 58].map(lap => {
                const x = Math.round(1192 + lap * 11.24)
                return (
                    <g key={lap}>
                        <path d={`M${x} 1113 V1119`} stroke="#999" />
                        <text x={lap ? x - 2 : x - 6} y="1131" textAnchor="middle" fontSize="14" fill="#aaa">{lap}</text>
                    </g>
                )
            })}
            <path d="M1203 678 V1119" stroke="#00ff00" strokeWidth="2" strokeDasharray="10 2" />
            <text x="1188" y="676" fontSize="14" fill="#00ff00">L1</text>
        </Chart>
    </Panel>
)

/* ---------- pit window ---------- */

const gapX = gap => Math.round(1309 - gap * 17.85)

const PitWindow = () => (
    <Panel $bg="#1e1e1e">
        <Chart viewBox="724 1177 1140 154">
            <rect x={gapX(22)} y="1207" width={gapX(-22) - gapX(22)} height="99" fill="#521414" />
            <rect x={gapX(12)} y="1207" width={gapX(-12) - gapX(12)} height="99" fill="#b85000" />
            <rect x={gapX(8)} y="1207" width={gapX(-8) - gapX(8)} height="99" fill="#b39700" />
            {[22, 12, 8, -8, -12, -22].map(gap => (
                <path key={gap} d={`M${gapX(gap)} 1206 V1306`} stroke="#d8c8b0" strokeOpacity="0.7" strokeDasharray="4 2" />
            ))}
            <path d="M773 1256 H1845" stroke="#fff" strokeWidth="2" />
            <path d="M1309 1206 V1306" stroke="#403000" strokeDasharray="4 2" />
            {[30, 25, 20, 15, 10, 5, 0, -5, -10, -15, -20, -25, -30].map(gap => (
                <g key={gap}>
                    <path d={`M${gapX(gap)} 1252 V1260`} stroke="#aaa" />
                    <text x={gapX(gap)} y="1321" textAnchor="middle" fontSize="14" fill="#ccc">{gap > 0 ? `+${gap}` : gap}</text>
                </g>
            ))}
            {[...drivers].reverse().map(d => {
                const x = gapX(d.gap)
                return (
                    <g key={d.code}>
                        <path d={`M${x} 1233 V1251`} stroke={d.team.bg} strokeWidth="2" />
                        <circle cx={x} cy="1256" r="5" fill={d.team.bg} stroke="#222" />
                        <rect x={x - 14} y="1218" width="29" height="14" fill={d.team.bg} stroke="#000" />
                        <text x={x} y="1229" textAnchor="middle" fontSize="12" fontWeight="700" fill={d.team.fg}>{d.code}</text>
                        <circle cx={x + 19} cy="1217" r="6" fill="#00b400" stroke="#cfc" />
                        <text x={x + 19} y="1221" textAnchor="middle" fontSize="11" fontWeight="700" fill="#fff">0</text>
                    </g>
                )
            })}
        </Chart>
    </Panel>
)

/* ---------- desktop ---------- */

const Desktop = styled.main`
    position: relative;
    min-height: 100vh;
`
const Pointer = styled.svg`
    position: absolute;
    left: 66%;
    top: 266px;
    margin-left: 3px;
`

const App = () => (
    <>
        <GlobalStyle />
        <Desktop>
            <MenuBar>
                <MenuItem>Return to Main</MenuItem>
                <MenuSep />
                <MenuItem>同步: ON</MenuItem>
                <MenuSep />
                <MenuItem>Show All Data</MenuItem>
                <MenuItem>Close All Windows</MenuItem>
                <MenuSep />
                <MenuItem>Tile Windows</MenuItem>
                <MenuItem>Cascade Windows</MenuItem>
            </MenuBar>
            <DeskWindow title="Track & Weather" x={5} y={31} w={709} h={150}><TrackWeather /></DeskWindow>
            <DeskWindow title="Race Control Messages" x={5} y={180} w={708} h={258} pad={9}><RaceControl /></DeskWindow>
            <DeskWindow title="Track Map" x={5} y={437} w={434} h={906}><TrackMap /></DeskWindow>
            <DeskWindow title="live_ranking_tower" x={716} y={31} w={1159} h={593} pad={9}><RankingTower /></DeskWindow>
            <DeskWindow title="Circle Map" x={716} y={623} w={418} h={524}><CircleMap /></DeskWindow>
            <DeskWindow title="Tyre Strategy" x={1134} y={623} w={739} h={524}><TyreStrategy /></DeskWindow>
            <DeskWindow title="Lap Time Distribution" x={439} y={437} w={295} h={907}><Waiting>Waiting for data...</Waiting></DeskWindow>
            <DeskWindow title="Pit Window" x={716} y={1146} w={1157} h={194}><PitWindow /></DeskWindow>
            <DeskWindow title="Chase Strategy" x={1875} y={31} w={677} h={357} pad={11}><ChaseStrategy /></DeskWindow>
            <DeskWindow title="Continue Current Tyres - Gap Evolution" x={1875} y={387} w={679} h={237} pad={3}><GapEvolution /></DeskWindow>
            <DeskWindow title="Driver Strategy" x={1873} y={623} w={682} h={359}><DriverStrategy /></DeskWindow>
            <DeskWindow title="Speed Trace" x={1873} y={981} w={680} h={361}><SpeedTrace /></DeskWindow>
            <Pointer width="14" height="22" viewBox="0 0 14 22">
                <path d="M1 1 V18 L5 14 L8 21 L11 20 L8 13 H13 Z" fill="#fff" stroke="#000" />
            </Pointer>
        </Desktop>
    </>
)

export default App
